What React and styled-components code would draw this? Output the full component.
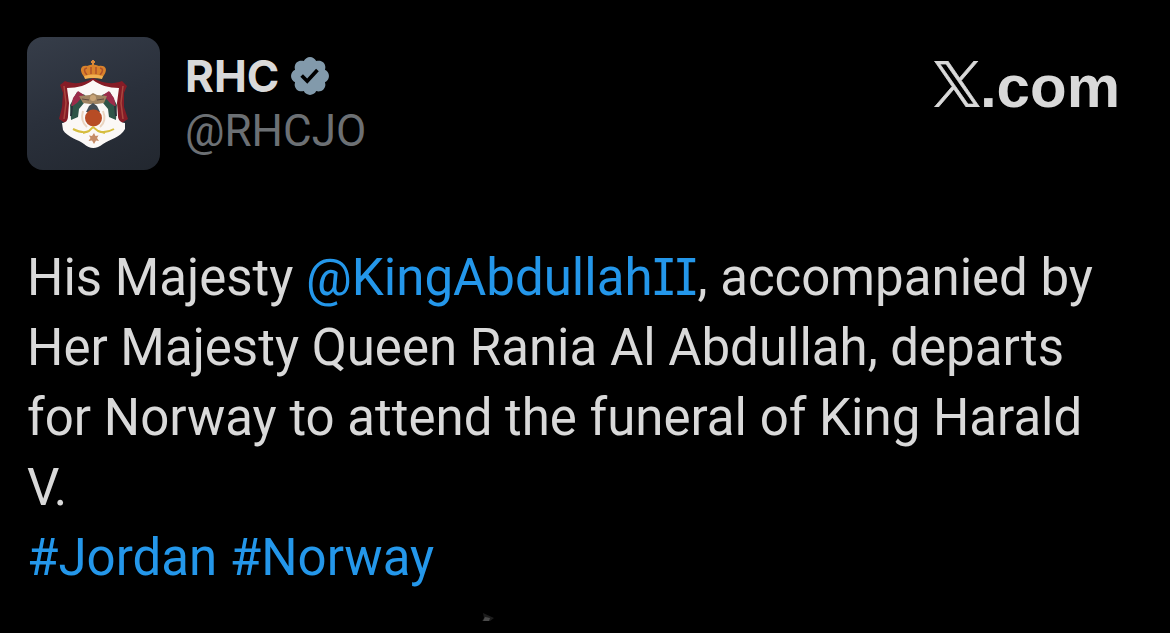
import React from "react";
import styled, { createGlobalStyle } from "styled-components";

const GlobalStyle = createGlobalStyle`
  * {
    box-sizing: border-box;
  }

  body {
    margin: 0;
    background: #000;
    color: #d9d9d9;
    font-family: Roboto, "Liberation Sans", sans-serif;
  }

  a {
    color: inherit;
    text-decoration: none;
  }
`;

const Post = styled.article`
  display: flex;
  flex-direction: column;
  padding: 37px 50px 0 27px;
`;

const Header = styled.header`
  display: flex;
  align-items: flex-start;
  gap: 25px;
`;

const Avatar = styled.svg`
  flex: none;
  width: 133px;
  height: 133px;
  border-radius: 16px;
  background: linear-gradient(160deg, #363d49, #2a303b 50%, #22272f);
`;

const Author = styled.div`
  display: flex;
  flex: 1;
  flex-direction: column;
  padding-top: 12px;
`;

const NameRow = styled.div`
  display: flex;
  align-items: center;
  gap: 12px;
`;

const Name = styled.a`
  font-family: Inter, "Liberation Sans", sans-serif;
  font-size: 44px;
  font-weight: 700;
  line-height: 54px;
`;

const Handle = styled.a`
  color: #6c7074;
  font-size: 44px;
  line-height: 56px;
`;

const Badge = styled.svg`
  width: 38px;
  height: 38px;
  fill: #829aab;
`;

const Brand = styled.a`
  display: flex;
  align-items: baseline;
  padding-top: 16px;
  font-family: "Liberation Sans", Arial, sans-serif;
  font-size: 60px;
  font-weight: 700;
  line-height: 68px;
`;

const BrandMark = styled.svg`
  width: 46px;
  height: 46px;
  fill: #d9d9d9;
  stroke: #d9d9d9;
  stroke-width: 22px;
`;

const Body = styled.p`
  margin: 73px 0 0;
  font-size: 51px;
  line-height: 70px;
`;

const Tag = styled.a`
  && {
    color: #2497ea;
  }
`;

const Numeral = styled.span`
  font-family: Inter, "Noto Sans", sans-serif;
  font-feature-settings: "cv08";
  line-height: 1;
`;

const Footer = styled.footer`
  display: flex;
  padding: 17px 0 12px 454px;
`;

function Crest() {
  return (
    <Avatar viewBox="0 0 133 133" role="img" aria-label="RHC">
      {/* mantle */}
      <path
        d="M66 41 C58 46 48 48 38 44 L33 48 L36 56 L35 70 L32 82 L41 88 L46 80 L46 58 L87 58 L88 80 L92 88 L101 82 L97 70 L97 56 L100 49 L95 44 C85 48 75 46 66 41Z"
        fill="#861c26"
      />
      <path d="M37 49 L39 66 L37 82 M96 49 L94 66 L96 82" stroke="#a8483f" strokeWidth="1.5" fill="none" />
      {/* shield */}
      <path
        d="M66 43 C60 48 51 51 40 51 L42 66 L41 79 C41 84 38 86 35 86 L36 93 C40 100 52 103 57 107 Q66 115 76 107 C82 103 94 100 98 92 L98 86 C94 86 91 83 91 79 L90 66 L92 51 C82 51 72 48 66 43Z"
        fill="#fbf8f6"
      />
      {/* flags */}
      <path d="M58 58 L50 55 L43 68 L44 83 L51 80 L52 72 L57 66 L61 65Z" fill="#2f5548" />
      <path d="M75 58 L83 55 L90 68 L89 83 L82 80 L81 72 L76 66 L72 65Z" fill="#2f5548" />
      <path d="M51 54 L46 61 L44 70 L50 66 L57 58Z M82 54 L87 61 L89 70 L83 66 L76 58Z" fill="#9c2c4a" />
      <path d="M45 69 L44 79 M88 69 L89 79" stroke="#28343a" strokeWidth="2" />
      {/* eagle and globe */}
      <path d="M52 59 L63 58 L66 56 L70 58 L80 59 L77 66 L70 67 L63 67 L56 66Z" fill="#a08462" />
      <path d="M55 62 L62 63 M77 62 L70 63" stroke="#604a42" strokeWidth="1" />
      <circle cx="66" cy="61" r="3" fill="#c8a477" />
      <path d="M62 69 L66 66 L70 69 L73 75 L59 75Z" fill="#434c54" />
      <path d="M56 74 Q53 84 60 90 M76 74 Q80 84 73 90" stroke="#ead5c0" strokeWidth="2" fill="none" />
      <circle cx="66.500" cy="81" r="8.500" fill="#b74c25" />
      {/* ribbon */}
      <path
        d="M46 92 Q56 97 62 94 L66 90 L71 94 Q78 97 87 92 M56 96 L62 94 M71 94 L78 96"
        stroke="#d6bd3e"
        strokeWidth="2"
        fill="none"
      />
      <path
        d="M67 96 L68.500 99 L71.500 98.500 L70 101 L72 104 L69 103.500 L67 107 L65 103.500 L61.500 104 L63.500 101 L62 98.500 L65 99Z"
        fill="#c58b66"
      />
      {/* crown */}
      <path d="M66 23 V30 M64 25 H68" stroke="#d9883a" strokeWidth="2" />
      <path d="M58 41 C51 33 54 28 60 29 Q66 26 72 29 C79 28 82 33 75 41Z" fill="#d9822b" />
      <path d="M60 38 Q55 32 60 31 M64 37 V30 M69 37 V30 M73 38 Q78 32 73 31" stroke="#b0522a" strokeWidth="1.5" fill="none" />
      <path d="M57 39 Q66 36 76 39 L75 42 Q66 40 58 42Z" fill="#f0b050" />
    </Avatar>
  );
}

function VerifiedBadge() {
  return (
    <Badge viewBox="1.6 1.6 18.8 18.8" role="img" aria-label="Verified account">
      <path d="M20.396 11c-.018-.646-.215-1.275-.57-1.816-.354-.54-.852-.972-1.438-1.246.223-.607.27-1.264.14-1.897-.131-.634-.437-1.218-.882-1.687-.47-.445-1.053-.75-1.687-.882-.633-.13-1.29-.083-1.897.14-.273-.587-.704-1.086-1.245-1.44S11.647 1.62 11 1.604c-.646.017-1.273.213-1.813.568s-.969.854-1.24 1.44c-.608-.223-1.267-.272-1.902-.14-.635.13-1.22.436-1.69.882-.445.47-.749 1.055-.878 1.688-.13.633-.08 1.29.144 1.896-.587.274-1.087.705-1.443 1.245-.356.54-.555 1.17-.574 1.817.02.647.218 1.276.574 1.817.356.54.856.972 1.443 1.245-.224.606-.274 1.263-.144 1.896.13.634.433 1.218.877 1.688.47.443 1.054.747 1.687.878.633.132 1.29.084 1.897-.136.274.586.705 1.084 1.246 1.439.54.354 1.17.551 1.816.569.647-.016 1.276-.213 1.817-.567s.972-.854 1.245-1.44c.604.239 1.266.296 1.903.164.636-.132 1.22-.447 1.68-.907.46-.46.776-1.044.908-1.681s.075-1.299-.165-1.903c.586-.274 1.084-.705 1.439-1.246.354-.54.551-1.17.569-1.816zM9.662 14.85l-3.429-3.428 1.293-1.302 2.072 2.072 4.4-4.794 1.347 1.246z" />
    </Badge>
  );
}

function XMark() {
  return (
    <BrandMark viewBox="0 0 1200 1227" role="img" aria-label="X">
      <path d="M714.163 519.284L1160.89 0H1055.03L667.137 450.887L357.328 0H0L468.492 681.821L0 1226.37H105.866L515.491 750.218L842.672 1226.37H1200L714.137 519.284H714.163ZM569.165 687.828L521.697 619.934L144.011 79.6944H306.615L611.412 515.685L658.88 583.579L1055.08 1150.3H892.476L569.165 687.854V687.828Z" />
    </BrandMark>
  );
}

function App() {
  return (
    <>
      <GlobalStyle />
      <Post>
        <Header>
          <Crest />
          <Author>
            <NameRow>
              <Name href="#profile">RHC</Name>
              <VerifiedBadge />
            </NameRow>
            <Handle href="#profile">@RHCJO</Handle>
          </Author>
          <Brand href="#home">
            <XMark />
            .com
          </Brand>
        </Header>
        <Body>
          His Majesty{" "}
          <Tag href="#mention">
            @KingAbdullah<Numeral>II</Numeral>
          </Tag>
          , accompanied by Her Majesty Queen Rania Al Abdullah, departs for
          Norway to attend the funeral of King Harald V.
          <br />
          <Tag href="#jordan">#Jordan</Tag> <Tag href="#norway">#Norway</Tag>
        </Body>
        <Footer>
          <svg width="14" height="12" viewBox="0 0 14 12" aria-hidden="true">
            <path d="M2 3 L13 8 L9 11 H1 L3 8Z" fill="#1c1c1c" />
            <path d="M4 7 L9 8 L8 11 H2Z" fill="#4a4a4a" />
          </svg>
        </Footer>
      </Post>
    </>
  );
}

export default App;
